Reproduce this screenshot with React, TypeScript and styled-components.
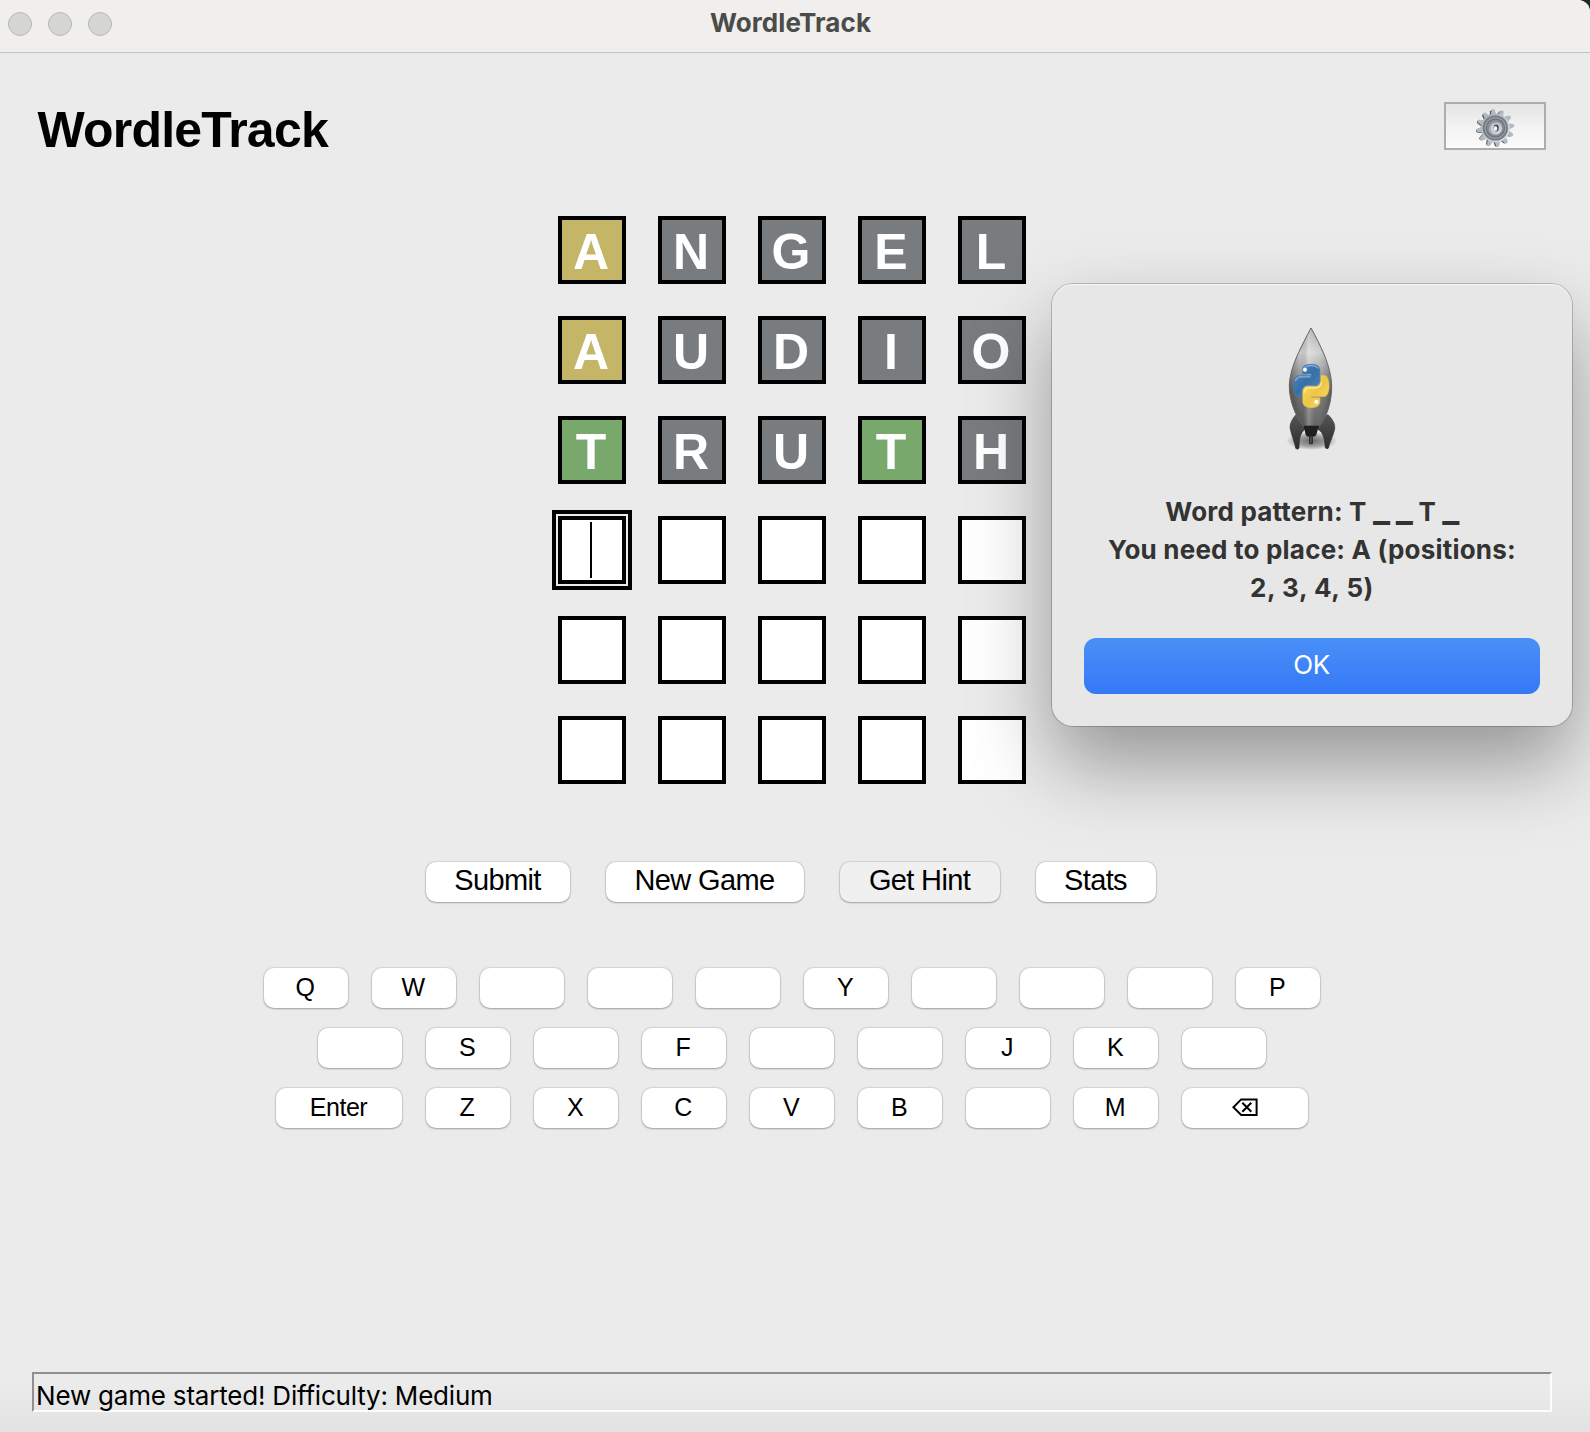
import React from "react";
import styled, { createGlobalStyle, css } from "styled-components";

const GlobalStyle = createGlobalStyle`
  html, body { margin: 0; padding: 0; background: #1d2a24; }
  *, *::before, *::after { box-sizing: border-box; }
  button { appearance: none; border: 0; margin: 0; padding: 0; }
`;

const ui = `"Liberation Sans", Arial, sans-serif`;
const system = `Inter, "Open Sans", sans-serif`;

const Window = styled.div`
  position: relative;
  display: flex;
  flex-direction: column;
  width: 1590px;
  height: 1432px;
  overflow: hidden;
  border-top-right-radius: 12px;
  background: linear-gradient(#ebebeb 0 1385px, #e2e2e2 1432px);
  font-family: ${ui};
  color: #000;
`;

const TitleBar = styled.header`
  display: grid;
  grid-template-columns: 120px 1fr 120px;
  flex: none;
  height: 53px;
  padding: 0 9px 0 0;
  border-bottom: 1px solid #c3c2c0;
  background: #f0efed;
`;

const Lights = styled.div`
  display: flex;
  gap: 16px;
  padding: 12px 0 0 8px;
`;

const Light = styled.span`
  width: 24px;
  height: 24px;
  border: 1px solid #b9b9b7;
  border-radius: 50%;
  background: #d6d6d4;
`;

const WindowTitle = styled.div`
  text-align: center;
  font: 700 26px/45px ${system};
  letter-spacing: 0.1px;
  color: #4b4b4a;
`;

const Content = styled.main`
  display: flex;
  flex-direction: column;
  align-items: center;
  flex: 1;
  padding: 49px 6px 0 0;
`;

const TopRow = styled.div`
  display: flex;
  justify-content: space-between;
  width: 100%;
  height: 48px;
  padding: 0 38px 0 37.5px;
`;

const Heading = styled.h1`
  margin: 0;
  font-size: 50px;
  line-height: 57px;
  font-weight: 700;
  letter-spacing: -0.8px;
`;

const SettingsButton = styled.button`
  display: flex;
  width: 102px;
  height: 48px;
  border: 2px solid #adadad;
  background: linear-gradient(#e4e4e4, #f2f2f2 50%, #fbfbfb);
  svg { display: block; }
`;

const Board = styled.div`
  display: grid;
  grid-template-columns: repeat(5, 68px);
  grid-auto-rows: 68px;
  gap: 32px;
  margin-top: 66px;
`;

type Mark = "present" | "absent" | "correct" | "empty";
const markColor: Record<Mark, string> = {
  present: "#c5b566",
  absent: "#787c7f",
  correct: "#79a86d",
  empty: "#ffffff",
};

const Cell = styled.div<{ $mark: Mark; $focused?: boolean }>`
  display: flex;
  justify-content: center;
  border: 4px solid #000;
  background: ${(p) => markColor[p.$mark]};
  color: #fff;
  font-size: 50px;
  font-weight: 700;
  line-height: 65px;
  padding-right: 2px;
  ${(p) =>
    p.$focused &&
    css`
      outline: 4px solid #000;
      outline-offset: 2px;
    `}
`;

const Caret = styled.span`
  width: 2px;
  height: 56px;
  margin: 2px 0 0 0;
  background: #000;
`;

const Actions = styled.div`
  display: flex;
  gap: 36px;
  margin: 78px 2px 0 0;
`;

const raised = css`
  border-radius: 10px;
  background: #fff;
  box-shadow: 0 0 1px 0.5px rgba(0, 0, 0, 0.09), 0 1px 2px rgba(0, 0, 0, 0.25);
  color: #000;
  text-align: center;
  font-family: ${ui};
`;

const ActionButton = styled.button<{ $width: number; $pressed?: boolean }>`
  ${raised}
  width: ${(p) => p.$width}px;
  height: 40px;
  padding: 0 1px 4px 0;
  font-size: 29px;
  line-height: 36px;
  letter-spacing: -0.65px;
  ${(p) => p.$pressed && "background: #f0f0f0;"}
`;

const Keyboard = styled.div`
  display: flex;
  flex-direction: column;
  align-items: center;
  gap: 20px;
  margin-top: 66px;
`;

const KeyRow = styled.div`
  display: flex;
  gap: 24px;
`;

const Key = styled.button<{ $wide?: boolean }>`
  ${raised}
  display: flex;
  justify-content: center;
  width: ${(p) => (p.$wide ? 126 : 84)}px;
  height: 40px;
  padding-right: ${(p) => (p.$wide ? 1 : 2)}px;
  font-size: 25px;
  line-height: 38px;
  letter-spacing: -0.5px;
  svg { display: block; margin-top: 10px; }
`;

const StatusBar = styled.footer`
  flex: none;
  width: 1520px;
  height: 40px;
  margin: auto 0 20px 0;
  padding: 2px 0 0 2px;
  border: 2px solid;
  border-color: #8f8f8f #fdfdfd #fdfdfd #8f8f8f;
  font: 400 26px/39px ${system};
  letter-spacing: -0.2px;
  white-space: nowrap;
`;

const Dialog = styled.section`
  position: absolute;
  left: 1052px;
  top: 284px;
  display: flex;
  flex-direction: column;
  align-items: center;
  width: 520px;
  height: 442px;
  padding: 26px 32px 32px;
  border-radius: 21px;
  background: #e7e7e7;
  box-shadow: inset 0 1px 1px #f6f6f6, 0 0 0 1px rgba(0, 0, 0, 0.2), 0 38px 80px rgba(0, 0, 0, 0.37);
`;

const RocketSlot = styled.div`
  width: 100px;
  height: 150px;
  margin-right: 4px;
  svg { display: block; }
`;

const Message = styled.div`
  display: flex;
  flex-direction: column;
  align-items: center;
  margin-top: 33px;
  font: 700 26px/38px ${system};
  color: #333;
  white-space: pre;
`;

const Line = styled.span<{ $tracking: number }>`
  height: 38px;
  letter-spacing: ${(p) => p.$tracking}px;
`;

const Blank = styled.span`
  font-size: 36px;
  line-height: 0;
  letter-spacing: -0.8px;
`;

const OkButton = styled.button`
  width: 456px;
  height: 56px;
  margin-top: auto;
  padding: 0 1px 3px 0;
  border-radius: 12px;
  background: linear-gradient(#4a90f7, #3478f6);
  color: #fff;
  font: 400 26px/53px ${system};
  letter-spacing: -0.5px;
`;

function Gear() {
  const teeth = Array.from({ length: 12 }, (_, i) => -97 + i * 30);
  return (
    <svg width="98" height="44" viewBox="0 0 98 44">
      <defs>
        <linearGradient id="gearBody" x1="0" y1="0" x2="1" y2="1">
          <stop offset="0" stopColor="#9ba3ab" />
          <stop offset=".5" stopColor="#c3c8d0" />
          <stop offset="1" stopColor="#dde1e8" />
        </linearGradient>
        <linearGradient id="gearHub" x1="0" y1="0" x2="1" y2="1">
          <stop offset="0" stopColor="#8a929a" />
          <stop offset="1" stopColor="#e6eaf0" />
        </linearGradient>
      </defs>
      <g transform="translate(49.4 24)">
        <g transform="translate(-1.1 .4)" fill="#4c4743">
          {teeth.map((a) => (
            <path key={a} transform={`rotate(${a})`} d="M12-3.4 L17.6-2 Q19.3 0 17.6 1.4 L12 2.8Z" />
          ))}
        </g>
        <g fill="#b4bac4">
          {teeth.map((a) => (
            <path key={a} transform={`rotate(${a})`} d="M12-3.4 L18.2-1.8 Q20 0 18.2 1.4 L12 2.8Z" />
          ))}
        </g>
        <circle r="14.4" fill="url(#gearBody)" />
        <circle r="12.6" fill="#727a80" />
        <circle r="11" fill="#949ca1" />
        <circle r="9.6" fill="#687177" />
        <circle r="8.6" fill="#858e94" />
        <circle r="6.6" fill="url(#gearHub)" />
        <circle r="4.6" fill="#cfd5dd" />
        <ellipse cx=".8" cy="0" rx="2.6" ry="3.4" fill="#454545" />
        <ellipse cx=".1" cy=".6" rx="1.8" ry="2.5" fill="#f4f4f4" />
      </g>
    </svg>
  );
}

function Rocket() {
  return (
    <svg width="100" height="150" viewBox="0 0 300 450">
      <defs>
        <linearGradient id="hull" x1="0" y1="0" x2="0" y2="1">
          <stop offset="0" stopColor="#a8a8a8" />
          <stop offset=".25" stopColor="#d4d4d4" />
          <stop offset=".45" stopColor="#a6a6a6" />
          <stop offset=".65" stopColor="#7a7a7a" />
          <stop offset="1" stopColor="#565656" />
        </linearGradient>
        <linearGradient id="sheen" x1="0" y1="0" x2="1" y2="0">
          <stop offset="0" stopColor="#000" stopOpacity=".32" />
          <stop offset=".25" stopColor="#000" stopOpacity=".04" />
          <stop offset=".45" stopColor="#fff" stopOpacity=".28" />
          <stop offset=".6" stopColor="#fff" stopOpacity=".08" />
          <stop offset="1" stopColor="#000" stopOpacity=".28" />
        </linearGradient>
        <linearGradient id="fin" x1="0" y1="0" x2="0" y2="1">
          <stop offset="0" stopColor="#555" />
          <stop offset=".5" stopColor="#414141" />
          <stop offset="1" stopColor="#2c2c2c" />
        </linearGradient>
        <linearGradient id="blueSnake" x1="0" y1="0" x2="1" y2="1">
          <stop offset="0" stopColor="#4f8fc9" />
          <stop offset=".5" stopColor="#376fa8" />
          <stop offset="1" stopColor="#4c84b8" />
        </linearGradient>
        <linearGradient id="yellowSnake" x1="0" y1="0" x2="1" y2="1">
          <stop offset="0" stopColor="#fbe36b" />
          <stop offset=".5" stopColor="#edc646" />
          <stop offset="1" stopColor="#f7dc6a" />
        </linearGradient>
        <radialGradient id="ground">
          <stop offset="0" stopColor="#000" stopOpacity=".55" />
          <stop offset=".6" stopColor="#000" stopOpacity=".3" />
          <stop offset="1" stopColor="#000" stopOpacity="0" />
        </radialGradient>
      </defs>
      <ellipse cx="155" cy="393" rx="76" ry="27" fill="url(#ground)" />
      <path d="M108 314C97 327 88 342 91 357C95 378 105 398 107 415Q112 420 117 415C118 393 118 369 136 357L130 327Z" fill="url(#fin)" stroke="#303030" strokeWidth="2" />
      <path d="M204 314C218 328 226 342 224 357C220 378 208 397 206 413Q201 420 196 413C193 391 193 369 173 357L180 327Z" fill="url(#fin)" stroke="#303030" strokeWidth="2" />
      <path d="M153 54C125 108 90 169 88 225C87 270 106 319 131 349H178C202 319 216 271 215 225C213 169 183 108 153 54Z" fill="url(#hull)" />
      <path d="M153 54C125 108 90 169 88 225C87 270 106 319 131 349H178C202 319 216 271 215 225C213 169 183 108 153 54Z" fill="url(#sheen)" stroke="#666" strokeWidth="3" />
      <path d="M131 347H177L169 374Q167 380 160 380H146Q139 380 137 374Z" fill="#202020" />
      <rect x="147" y="378" width="12" height="25" rx="3" fill="#303030" />
      <rect x="152" y="380" width="2" height="19" fill="#777" />
      <g transform="translate(87.5 160.5) scale(1.04 1.26)">
        <path
          fill="url(#blueSnake)"
          stroke="#4a82b6"
          strokeWidth="1.5"
          d="M63.391 1.988c-4.222.02-8.252.379-11.8 1.007-10.45 1.846-12.346 5.71-12.346 12.837v9.411h24.693v3.137H29.977c-7.176 0-13.46 4.313-15.426 12.521-2.268 9.405-2.368 15.275 0 25.096 1.755 7.311 5.947 12.519 13.124 12.519h8.491V67.234c0-8.151 7.051-15.34 15.426-15.34h24.665c6.866 0 12.346-5.654 12.346-12.548V15.833c0-6.693-5.646-11.72-12.346-12.837-4.244-.706-8.645-1.027-12.866-1.008z"
        />
        <path
          fill="url(#yellowSnake)"
          stroke="#e3c65c"
          strokeWidth="1.5"
          d="M91.682 28.38v10.966c0 8.5-7.208 15.655-15.426 15.655H51.591c-6.756 0-12.346 5.783-12.346 12.549v23.515c0 6.691 5.818 10.628 12.346 12.547 7.816 2.297 15.312 2.713 24.665 0 6.216-1.801 12.346-5.423 12.346-12.547v-9.412H63.938v-3.138h37.012c7.176 0 9.852-5.005 12.348-12.519 2.578-7.735 2.467-15.174 0-25.096-1.774-7.145-5.161-12.521-12.348-12.521h-9.268z"
        />
        <path d="M42 13Q48 5 63 5Q78 5 84 12" fill="none" stroke="#a5cdef" strokeWidth="3" opacity=".7" />
        <path d="M18 42Q22 32 32 32H62" fill="none" stroke="#a5cdef" strokeWidth="3" opacity=".7" />
        <path d="M43 69Q46 58 57 58H78Q90 57 94 44" fill="none" stroke="#fff6b8" strokeWidth="3" opacity=".8" />
      </g>
      <circle cx="135" cy="179" r="6" fill="#fff" />
      <circle cx="169" cy="275" r="6" fill="#fff" />
    </svg>
  );
}

function Backspace() {
  return (
    <svg width="26" height="19" viewBox="0 0 26 19" fill="none" stroke="#000" strokeWidth="2">
      <path d="M9.2 1.4H24.6V17H9.2L1.4 9.2Z" />
      <path d="M10.3 4.8L19.3 13.8M19.3 4.8L10.3 13.8" />
    </svg>
  );
}

const guesses: { word: string; marks: Mark[] }[] = [
  { word: "ANGEL", marks: ["present", "absent", "absent", "absent", "absent"] },
  { word: "AUDIO", marks: ["present", "absent", "absent", "absent", "absent"] },
  { word: "TRUTH", marks: ["correct", "absent", "absent", "correct", "absent"] },
  { word: "     ", marks: ["empty", "empty", "empty", "empty", "empty"] },
  { word: "     ", marks: ["empty", "empty", "empty", "empty", "empty"] },
  { word: "     ", marks: ["empty", "empty", "empty", "empty", "empty"] },
];

const keyRows: string[][] = [
  ["Q", "W", "", "", "", "Y", "", "", "", "P"],
  ["", "S", "", "F", "", "", "J", "K", ""],
  ["Enter", "Z", "X", "C", "V", "B", "", "M", "back"],
];

const actions = [
  { label: "Submit", width: 144 },
  { label: "New Game", width: 198 },
  { label: "Get Hint", width: 160, pressed: true },
  { label: "Stats", width: 120 },
];

export default function App() {
  return (
    <>
      <GlobalStyle />
      <Window>
        <TitleBar>
          <Lights>
            <Light />
            <Light />
            <Light />
          </Lights>
          <WindowTitle>WordleTrack</WindowTitle>
        </TitleBar>
        <Content>
          <TopRow>
            <Heading>WordleTrack</Heading>
            <SettingsButton aria-label="Settings">
              <Gear />
            </SettingsButton>
          </TopRow>
          <Board>
            {guesses.map((g, r) =>
              g.marks.map((mark, c) => {
                const focused = r === 3 && c === 0;
                return (
                  <Cell key={`${r}-${c}`} $mark={mark} $focused={focused}>
                    {focused ? <Caret /> : g.word[c].trim()}
                  </Cell>
                );
              })
            )}
          </Board>
          <Actions>
            {actions.map((a) => (
              <ActionButton key={a.label} $width={a.width} $pressed={a.pressed}>
                {a.label}
              </ActionButton>
            ))}
          </Actions>
          <Keyboard>
            {keyRows.map((row, r) => (
              <KeyRow key={r}>
                {row.map((k, i) => (
                  <Key key={i} $wide={k.length > 1}>
                    {k === "back" ? <Backspace /> : k}
                  </Key>
                ))}
              </KeyRow>
            ))}
          </Keyboard>
          <StatusBar>New game started! Difficulty: Medium</StatusBar>
        </Content>
        <Dialog role="dialog">
          <RocketSlot>
            <Rocket />
          </RocketSlot>
          <Message>
            <Line $tracking={0.2}>
              Word pattern: T <Blank>_</Blank> <Blank>_</Blank> T <Blank>_</Blank>
            </Line>
            <Line $tracking={0.2}>You need to place: A (positions:</Line>
            <Line $tracking={0.55}>2, 3, 4, 5)</Line>
          </Message>
          <OkButton>OK</OkButton>
        </Dialog>
      </Window>
    </>
  );
}
